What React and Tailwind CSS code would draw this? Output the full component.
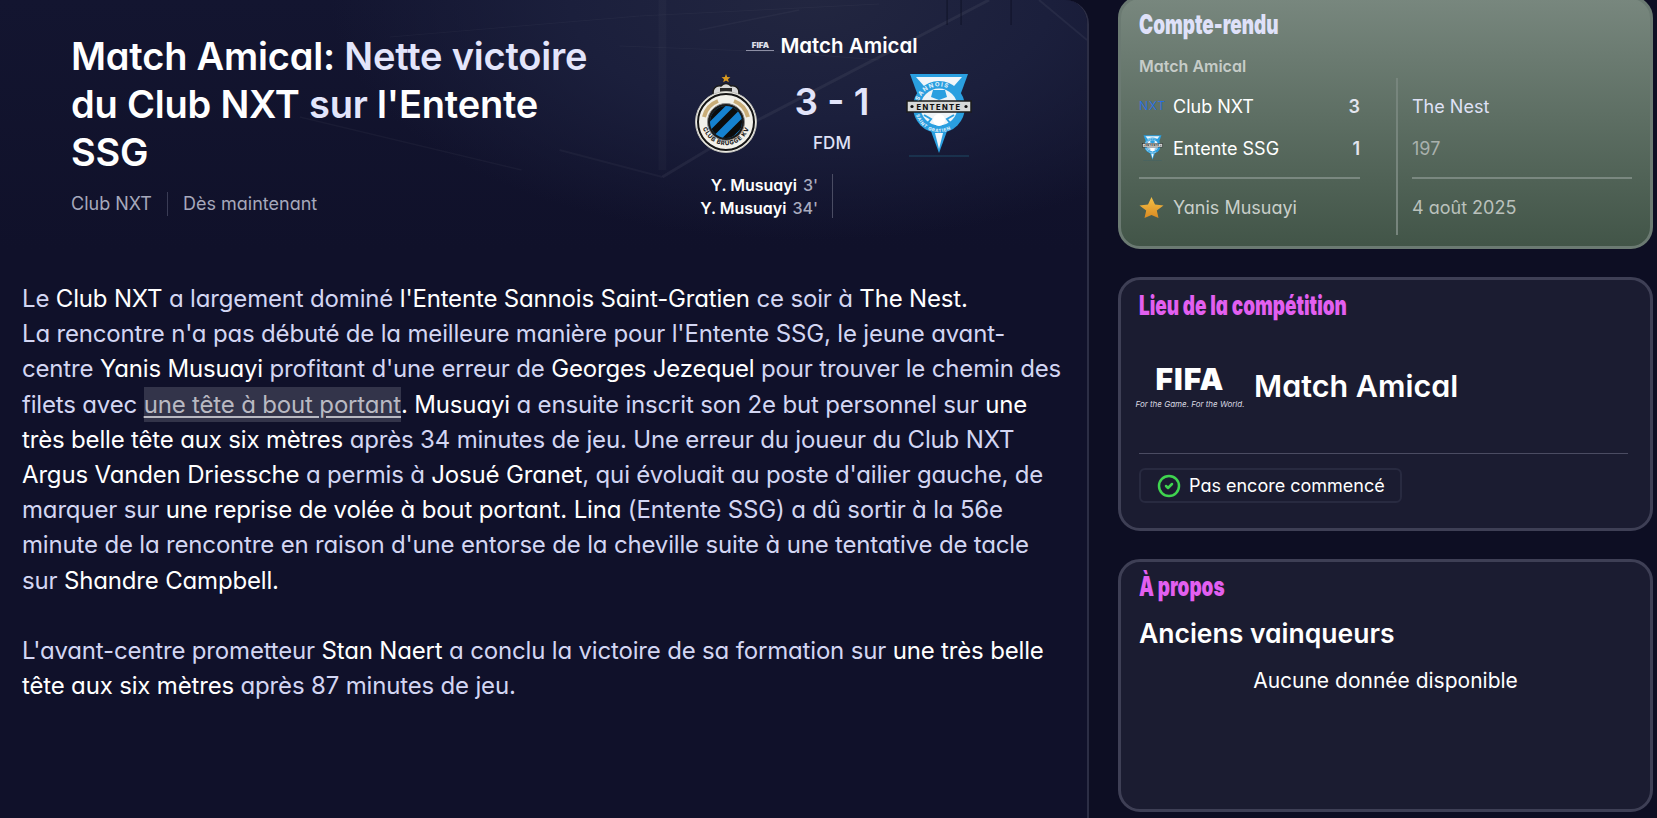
import { CircleCheck } from "lucide-react";

const W = ({ children }) => <span className="text-white">{children}</span>;

function FifaLogo({ big }) {
  return (
    <div className={big ? "flex w-[102px] flex-col items-center" : "flex w-[28px] flex-col items-center"}>
      <span className={big ? "text-[30px] leading-[32px] font-black tracking-[1px] text-white" : "text-[8px] leading-[9px] font-black text-[#dfe0ea]"}>FIFA</span>
      <span className={big ? "mt-[5px] text-[8px] leading-[9px] whitespace-nowrap text-[#d8d8e0] italic" : "h-px w-full bg-[#8d8fa5]"}>
        {big ? "For the Game. For the World." : ""}
      </span>
    </div>
  );
}

function BruggeCrest() {
  return (
    <svg width="64" height="82" viewBox="0 0 64 82">
      <defs>
        <clipPath id="inner"><circle cx="32" cy="49" r="16" /></clipPath>
        <path id="ringText" d="M9 55 A24 24 0 0 0 55 55" />
      </defs>
      <polygon points="32,1 33.2,4 36.4,4.2 34,6.2 34.8,9.2 32,7.6 29.2,9.2 30,6.2 27.6,4.2 30.8,4" fill="#d99a1f" />
      <path d="M20 24 C17 16 22 12 27 13 C30 10 34 10 37 13 C42 12 47 16 44 24 Z" fill="#d8d8d8" stroke="#1a1a1a" strokeWidth="1.5" />
      <rect x="26" y="15" width="12" height="7" fill="#2a2a2a" />
      <circle cx="32" cy="49" r="30.5" fill="#f2f1ea" stroke="#bdbdb8" strokeWidth="1" />
      <circle cx="32" cy="49" r="28" fill="none" stroke="#151515" strokeWidth="2" />
      <path d="M10 44 A22.5 22.5 0 0 1 24 28" fill="none" stroke="#c9ad78" strokeWidth="4" />
      <path d="M54 44 A22.5 22.5 0 0 0 40 28" fill="none" stroke="#c9ad78" strokeWidth="4" />
      <circle cx="32" cy="49" r="18.5" fill="#1a1a1a" stroke="#8a8a8a" strokeWidth="1" />
      <g clipPath="url(#inner)">
        <rect x="14" y="31" width="36" height="36" fill="#1581cf" />
        <path d="M8 52 L36 24 M16 62 L46 32 M26 72 L56 42" stroke="#0c0c0c" strokeWidth="6.5" />
      </g>
      <text fontSize="6" fontWeight="800" fill="#222" letterSpacing="0.6" fontFamily="Inter, sans-serif">
        <textPath href="#ringText">CLUB BRUGGE KV</textPath>
      </text>
    </svg>
  );
}

function EntenteCrest({ small }) {
  return (
    <svg width={small ? 21 : 66} height={small ? 26 : 84} viewBox="0 0 66 84">
      <defs>
        <path id="topArc" d="M13 28 A21 21 0 0 1 53 28" />
        <path id="botArc" d="M10 42 A24 24 0 0 0 56 42" />
      </defs>
      <polygon points="4,1 62,1 33,80" fill="#2a9fe0" />
      <polygon points="10,4 56,4 33,30" fill="#f1f6fa" />
      <polygon points="29,60 37,60 33,76" fill="#f1f6fa" />
      <circle cx="33" cy="34" r="26" fill="#2a9fe0" />
      <circle cx="33" cy="34" r="18.5" fill="#eef4f8" />
      <polygon points="27,17 39,17 41,24 33,27 25,24" fill="#2a9fe0" />
      <circle cx="33" cy="47" r="6" fill="#ffffff" />
      <path d="M18 42 L25 46 L22 50 M48 42 L41 46 L44 50" stroke="#2a9fe0" strokeWidth="2" fill="none" />
      <rect x="1" y="28" width="64" height="11" fill="#d7d9d8" stroke="#1c1c1c" strokeWidth="1.5" />
      <circle cx="6" cy="33.5" r="1.6" fill="#111" />
      <circle cx="60" cy="33.5" r="1.6" fill="#111" />
      <text x="33" y="36.5" textAnchor="middle" fontSize="7.5" fontWeight="800" letterSpacing="1.4" fill="#111" fontFamily="Inter, sans-serif">ENTENTE</text>
      <text fontSize="6" fontWeight="700" fill="#e8f3fa" letterSpacing="1.2" fontFamily="Inter, sans-serif"><textPath href="#topArc">SANNOIS</textPath></text>
      <text fontSize="4.6" fontWeight="700" fill="#e8f3fa" letterSpacing="0.6" fontFamily="Inter, sans-serif"><textPath href="#botArc">SAINT GRATIEN</textPath></text>
      <path d="M3 83 H63" stroke="#1f5f78" strokeOpacity="0.7" strokeWidth="1" />
    </svg>
  );
}

function GoldStar() {
  return (
    <svg width="25" height="24" viewBox="0 0 25 24">
      <defs>
        <linearGradient id="gold" x1="0" y1="0" x2="0" y2="1">
          <stop offset="0" stopColor="#f6c146" />
          <stop offset="1" stopColor="#d98a22" />
        </linearGradient>
      </defs>
      <polygon points="12.5,1 16,8.5 24.5,9.5 17.8,14.5 19.5,22 12.5,19 5.5,22 7.2,14.5 0.5,9.5 9,8.5" fill="url(#gold)" />
    </svg>
  );
}

function PitchLines() {
  return (
    <svg className="absolute inset-0 h-full w-full" viewBox="0 0 1088 250" preserveAspectRatio="none" fill="none">
      <g stroke="#ffffff" strokeOpacity="0.035">
        <path d="M990 0 L753 123 L663 177" strokeWidth="3" strokeOpacity="0.055" />
        <path d="M300 117 L522 170" strokeWidth="1.5" />
        <path d="M390 37 L640 16 L880 4" />
        <path d="M620 46 L780 52 L880 60" />
        <path d="M800 10 L700 30" strokeWidth="1.5" />
        <path d="M560 150 L663 177" strokeWidth="2" />
        <path d="M663 0 L663 170" strokeWidth="8" strokeOpacity="0.025" />
        <path d="M1040 0 L1088 40" strokeWidth="2" strokeOpacity="0.05" />
      </g>
      <g stroke="#0c0e22" strokeOpacity="0.5" strokeWidth="1.5">
        <path d="M948 0 V25 M962 0 V25 M1012 0 V25" />
      </g>
    </svg>
  );
}

function Hero() {
  return (
    <section className="relative flex h-[250px] overflow-hidden bg-[radial-gradient(ellipse_480px_240px_at_810px_0px,#222640_0%,#1b1f3c_50%,transparent_100%),linear-gradient(180deg,#131530_0%,#10112a_100%)]">
      <PitchLines />
      <div className="relative w-[620px] shrink-0 pt-[32px] pl-[71px]">
        <h1 className="text-[38px] leading-[48px] font-semibold tracking-[-0.2px] text-[#e3e5fb]">
          <W>Match Amical:</W> Nette victoire
          <br />
          <W>du Club NXT</W> sur <W>l'Entente</W>
          <br />
          <W>SSG</W>
        </h1>
        <div className="mt-[16px] flex items-center text-[18px] leading-[24px] text-[#a6a8bb]">
          <span>Club NXT</span>
          <span className="mx-[15px] h-[24px] w-px bg-[#3a3c55]" />
          <span>Dès maintenant</span>
        </div>
      </div>
      <div className="relative w-[424px] shrink-0 pt-[33px] pl-[74px]">
        <div className="flex w-[276px] items-center justify-center gap-[6px]">
          <FifaLogo />
          <span className="text-[20.5px] leading-[26px] font-semibold text-white">Match Amical</span>
        </div>
        <div className="mt-[14px] flex w-[278px] items-start justify-between">
          <BruggeCrest />
          <div className="flex flex-col items-center pt-[5px]">
            <div className="text-[37px] leading-[48px] font-semibold text-[#e2e4fa]">3 - 1</div>
            <div className="mt-[6px] text-[17px] leading-[22px] font-medium text-[#dfe1f6]">FDM</div>
          </div>
          <EntenteCrest />
        </div>
        <div className="mt-[17px] flex">
          <div className="w-[124px] text-right text-[16px] leading-[23px] font-semibold whitespace-nowrap text-white">
            <div>Y. Musuayi <span className="ml-[2px] font-medium text-[#a9abbf]">3'</span></div>
            <div>Y. Musuayi <span className="ml-[2px] font-medium text-[#a9abbf]">34'</span></div>
          </div>
          <span className="ml-[14px] h-[44px] w-px bg-[#4a4c63]" />
        </div>
      </div>
    </section>
  );
}

function Article() {
  return (
    <div className="pt-[31px] pl-[22px] text-[24px] leading-[35.2px] tracking-[-0.17px] whitespace-nowrap text-[#d3d6f3]">
      <p>Le <W>Club NXT</W> a largement dominé <W>l'Entente Sannois Saint-Gratien</W> ce soir à <W>The Nest.</W></p>
      <p>La rencontre n'a pas débuté de la meilleure manière pour l'Entente SSG, le jeune avant-</p>
      <p>centre <W>Yanis Musuayi</W> profitant d'une erreur de <W>Georges Jezequel</W> pour trouver le chemin des</p>
      <p>
        filets avec <a className="inline-block bg-[#33344a] text-[#b9b9c2] underline underline-offset-[3px]">une tête à bout portant</a>
        <W>. Musuayi</W> a ensuite inscrit son 2e but personnel sur <W>une</W>
      </p>
      <p><W>très belle tête aux six mètres</W> après 34 minutes de jeu. Une erreur du joueur du Club NXT</p>
      <p><W>Argus Vanden Driessche</W> a permis à <W>Josué Granet</W>, qui évoluait au poste d'ailier gauche, de</p>
      <p>marquer sur <W>une reprise de volée à bout portant. Lina</W> (Entente SSG) a dû sortir à la 56e</p>
      <p>minute de la rencontre en raison d'une entorse de la cheville suite à une tentative de tacle</p>
      <p>sur <W>Shandre Campbell.</W></p>
      <p className="mt-[35px]">L'avant-centre prometteur <W>Stan Naert</W> a conclu la victoire de sa formation sur <W>une très belle</W></p>
      <p><W>tête aux six mètres</W> après 87 minutes de jeu.</p>
    </div>
  );
}

function CardTitle({ children, className }) {
  return (
    <h2 className={"origin-left scale-x-[0.7] text-[27px] leading-[30px] font-black whitespace-nowrap " + className}>{children}</h2>
  );
}

function Summary() {
  return (
    <div className="-mt-[4px] h-[253px] rounded-[22px] border-[3px] border-[#6b7a72] bg-gradient-to-b from-[#78877e] to-[#425548] pt-[11px] pl-[18px]">
      <CardTitle className="text-[#dfe1f9]">Compte-rendu</CardTitle>
      <div className="mt-[15px] text-[16px] leading-[22px] font-semibold text-[#c6ccc8]">Match Amical</div>
      <div className="-mt-px flex">
        <div className="w-[221px] pt-[9px]">
          <div className="flex h-[42px] items-center text-[18px] text-white">
            <span className="w-[34px] text-[12px] font-light tracking-[1px] text-[#1f6ff2]">NXT</span>
            <span className="flex-1">Club NXT</span>
            <span className="font-semibold text-[#e3e5ee]">3</span>
          </div>
          <div className="flex h-[42px] items-center text-[18px] text-white">
            <span className="w-[34px] pl-[3px]"><EntenteCrest small /></span>
            <span className="flex-1">Entente SSG</span>
            <span className="font-semibold text-[#e3e5ee]">1</span>
          </div>
          <div className="mt-[8px] h-[2px] bg-[#7a8880]" />
          <div className="mt-[15px] flex items-center text-[18px] text-[#c9cfca]">
            <span className="w-[34px]"><GoldStar /></span>
            Yanis Musuayi
          </div>
        </div>
        <div className="mt-[2px] ml-[36px] h-[157px] w-[2px] bg-[#77857d]" />
        <div className="ml-[14px] w-[220px] pt-[9px] text-[18px]">
          <div className="flex h-[42px] items-center text-[#dfe1f6]">The Nest</div>
          <div className="flex h-[42px] items-center text-[#a9b1ad]">197</div>
          <div className="mt-[8px] h-[2px] bg-[#7a8880]" />
          <div className="mt-[15px] text-[#bac1bc]">4 août 2025</div>
        </div>
      </div>
    </div>
  );
}

function Competition() {
  return (
    <div className="h-[254px] rounded-[22px] border-[3px] border-[#3e3f55] bg-[#1b1c31] pt-[11px] pr-[22px] pl-[18px]">
      <CardTitle className="text-[#e25ff0]">Lieu de la compétition</CardTitle>
      <div className="mt-[42px] flex items-center gap-[13px]">
        <FifaLogo big />
        <span className="text-[30.5px] leading-[40px] font-semibold text-white">Match Amical</span>
      </div>
      <div className="mt-[44px] h-px bg-[#4b4c62]" />
      <div className="mt-[14px] flex h-[35px] w-[263px] items-center rounded-[6px] border-2 border-[#282a40] pl-[16px] text-[18px] text-white">
        <CircleCheck size={24} strokeWidth={2.5} className="mr-[8px] text-[#3fd44f]" />
        Pas encore commencé
      </div>
    </div>
  );
}

function About() {
  return (
    <div className="h-[253px] rounded-[22px] border-[3px] border-[#3e3f55] bg-[#1b1c31] pt-[10px] pl-[18px]">
      <CardTitle className="text-[#e25ff0]">À propos</CardTitle>
      <div className="mt-[15px] text-[26.5px] leading-[32px] font-semibold text-white">Anciens vainqueurs</div>
      <div className="mt-[17px] pr-[18px] text-center text-[21px] leading-[30px] text-white">Aucune donnée disponible</div>
    </div>
  );
}

export default function App() {
  return (
    <div className="flex h-screen overflow-hidden bg-[#0d0e23] font-['Inter',sans-serif] [font-feature-settings:'cv11']">
      <main className="h-full w-[1089px] shrink-0 overflow-hidden rounded-tr-[24px] border-r-2 border-[#2c2e45] bg-[#10112a]">
        <Hero />
        <Article />
      </main>
      <aside className="ml-[29px] flex w-[535px] shrink-0 flex-col gap-[28px]">
        <Summary />
        <Competition />
        <About />
      </aside>
    </div>
  );
}
